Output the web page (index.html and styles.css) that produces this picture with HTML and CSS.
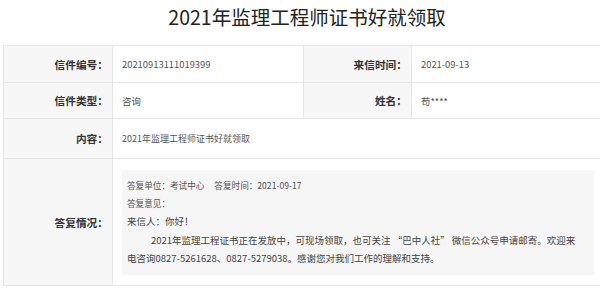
FILE: index.html
```html
<!DOCTYPE html>
<html lang="zh-CN">
<head>
<meta charset="utf-8">
<title>2021年监理工程师证书好就领取</title>
<link rel="stylesheet" href="styles.css">
</head>
<body>
<div class="page">
  <h1 class="title">2021年监理工程师证书好就领取</h1>
  <table class="letter">
    <colgroup>
      <col class="c-label1"><col class="c-val1"><col class="c-label2"><col class="c-val2">
    </colgroup>
    <tr class="row-a">
      <th>信件编号：</th>
      <td>20210913111019399</td>
      <th>来信时间：</th>
      <td>2021-09-13</td>
    </tr>
    <tr class="row-b">
      <th>信件类型：</th>
      <td>咨询</td>
      <th>姓名：</th>
      <td>苟****</td>
    </tr>
    <tr class="row-c">
      <th>内容：</th>
      <td colspan="3" class="content">2021年监理工程师证书好就领取</td>
    </tr>
    <tr class="row-d">
      <th>答复情况：</th>
      <td colspan="3" class="reply-cell">
        <div class="reply">
          <div class="reply-meta">答复单位：考试中心<span class="gap"></span>答复时间：2021-09-17</div>
          <div class="reply-meta">答复意见：</div>
          <div class="reply-body">来信人：你好！</div>
          <p class="reply-para">2021年监理工程证书正在发放中，可现场领取，也可关注 “巴中人社” 微信公众号申请邮寄。欢迎来电咨询0827-5261628、0827-5279038。感谢您对我们工作的理解和支持。</p>
        </div>
      </td>
    </tr>
  </table>
</div>
</body>
</html>
```
FILE: styles.css
```css
html, body {
  margin: 0;
  padding: 0;
  overflow: hidden;
  background: #ffffff;
}
body {
  font-family: "Noto Sans CJK SC", "Noto Sans", sans-serif;
  color: #555;
}
.page {
  padding-left: 3px;
  width: 603px;
}
.title {
  margin: 0 0 11px 0;
  height: 34px;
  line-height: 34px;
  font-size: 19.5px;
  font-weight: normal;
  color: #222;
  text-align: center;
  padding-left: 5px;
}
.letter {
  border-collapse: collapse;
  width: 600px;
  table-layout: fixed;
}
.c-label1 { width: 109px; }
.c-val1 { width: 191px; }
.c-label2 { width: 108px; }
.letter th,
.letter td {
  border: 1px solid #e6e6e6;
  padding: 0;
  vertical-align: middle;
}
.letter th {
  background: #f7f7f7;
  text-align: right;
  font-size: 10.7px;
  font-weight: bold;
  color: #333;
  padding-right: 4px;
}
.letter td {
  padding-left: 9px;
  font-size: 9.4px;
  color: #555;
}
.row-a th, .row-a td { height: 36px; }
.row-b th, .row-b td { height: 35px; }
.row-c th, .row-c td { height: 39px; }
.letter .content { font-size: 9px; }
.letter .reply-cell {
  padding: 11px 8px 10px 9px;
}
.reply {
  background: #f6f6f6;
  padding: 6px 15px 8px 5px;
  min-height: 91px;
}
.reply-meta {
  font-size: 8.6px;
  line-height: 18px;
  color: #555;
}
.gap {
  display: inline-block;
  width: 10px;
}
.reply-body {
  font-size: 9.5px;
  line-height: 19px;
  color: #444;
}
.reply-para {
  margin: 0;
  font-size: 9.5px;
  line-height: 18px;
  text-indent: 24px;
  color: #444;
}
```
